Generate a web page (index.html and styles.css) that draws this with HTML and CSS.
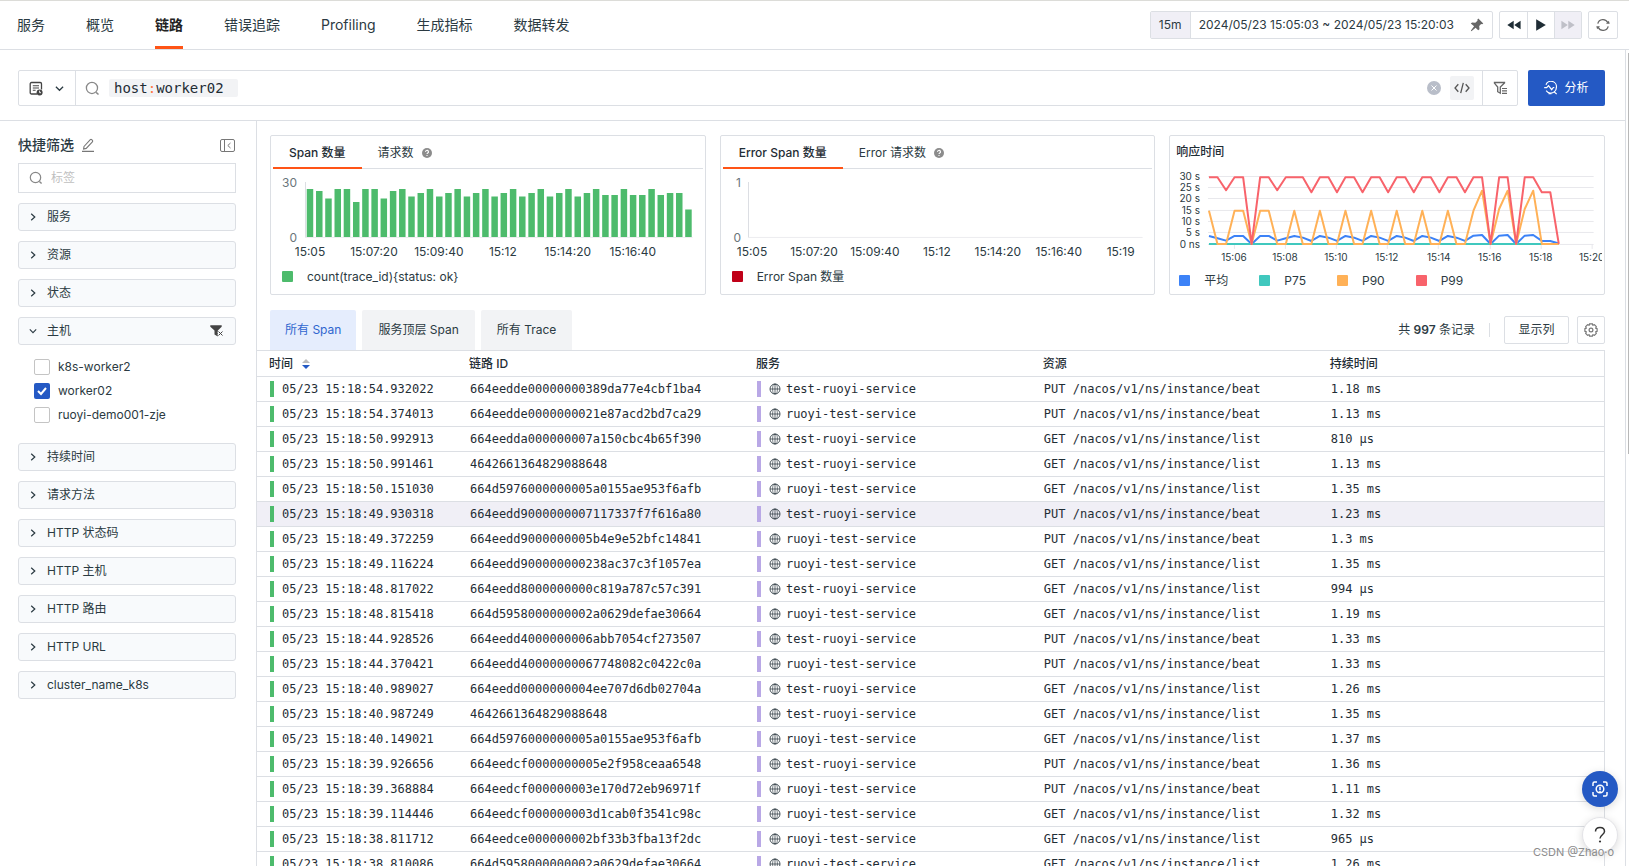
FILE: index.html
```html
<!DOCTYPE html>
<html lang="zh-CN">
<head>
<meta charset="utf-8">
<title>链路</title>
<link rel="stylesheet" href="styles.css">
</head>
<body>
<svg class="sprite" aria-hidden="true">
  <symbol id="i-search" viewBox="0 0 14 14"><circle cx="6.5" cy="6.5" r="5.2" fill="none" stroke="currentColor" stroke-width="1.2"/><path d="M10.4 10.6l2.2 2" stroke="currentColor" stroke-width="1.4"/></symbol>
  <symbol id="i-right" viewBox="0 0 8 8"><path d="M2.2 .8L5.8 4 2.2 7.2" fill="none" stroke="currentColor" stroke-width="1.2"/></symbol>
  <symbol id="i-down" viewBox="0 0 8 8"><path d="M.8 2.4L4 5.6l3.2-3.2" fill="none" stroke="currentColor" stroke-width="1.1"/></symbol>
  <symbol id="i-globe" viewBox="0 0 12 12"><g fill="none" stroke="currentColor" stroke-width=".8"><circle cx="6" cy="6" r="5"/><ellipse cx="6" cy="6" rx="2.400" ry="5" stroke-width=".6"/><path d="M6 1v10M1 6h10" stroke-width=".7"/></g></symbol>
  <symbol id="i-help" viewBox="0 0 10 10"><circle cx="5" cy="5" r="5" fill="#8c8c8c"/><path d="M3.500 3.900a1.500 1.400 0 1 1 2.300 1.100c-.6.400-.8.600-.8 1.100M5 7v1" fill="none" stroke="#fff" stroke-width="1.100"/></symbol>
</svg>

<header class="topbar">
  <nav class="nav">
    <a href="#">服务</a>
    <a href="#">概览</a>
    <a href="#" class="active">链路</a>
    <a href="#">错误追踪</a>
    <a href="#">Profiling</a>
    <a href="#">生成指标</a>
    <a href="#">数据转发</a>
  </nav>
  <div class="time">
    <div class="range">
      <button class="span-btn" type="button">15m</button>
      <button class="range-btn" type="button">2024/05/23 15:05:03 ~ 2024/05/23 15:20:03
        <svg width="14" height="14" viewBox="0 0 14 14"><path d="M8.300.6l5 4.800-1.200.8-1-.2-1.900 2.100.3 3.200-1.300 1L5.600 9.700 1.700 13l-.8.2.2-.9 3-4L.8 5.600l1.300-1.200 3.200.3 2.200-2-.2-1z" fill="#666"/></svg>
      </button>
    </div>
    <div class="steps">
      <button type="button" aria-label="后退"><svg width="14" height="10" viewBox="0 0 14 10"><path d="M6.700.8v8.400L.3 5zM13.600.8v8.400L7.200 5z" fill="#1f2d35"/></svg></button>
      <button type="button" aria-label="播放"><svg width="10" height="12" viewBox="0 0 10 12"><path d="M.2.3L9.800 6 .2 11.700z" fill="#1f2d35"/></svg></button>
      <button type="button" class="off" aria-label="前进" disabled><svg width="14" height="10" viewBox="0 0 14 10"><path d="M.4.8v8.400L6.800 5zM7.300.8v8.400L13.700 5z" fill="#bfc0c8"/></svg></button>
    </div>
    <button class="box-btn" type="button" aria-label="刷新"><svg width="14" height="14" viewBox="0 0 14 14"><path d="M1.800 5.700A5.300 5.300 0 0 1 11.800 4.800M12.200 8.300A5.300 5.300 0 0 1 2.200 9.200" fill="none" stroke="#666" stroke-width="1.300"/><path d="M10 5.700h3.700L12.900 2.800zM4 8.300H.3l.8 2.900z" fill="#666"/></svg></button>
  </div>
</header>

<div class="page">
  <div class="searchbar">
    <div class="query">
      <button class="saved" type="button" aria-label="快照">
        <svg width="14" height="15" viewBox="0 0 14 15"><path d="M8 13H2.500A1.300 1.300 0 0 1 1.200 11.700V2.800A1.300 1.300 0 0 1 2.500 1.500h8.700a1.300 1.300 0 0 1 1.300 1.300V8.500" fill="none" stroke="#444" stroke-width="1.300"/><path d="M3.800 4.700h6.200M3.800 7h6.200M3.800 9.300h2.800" stroke="#444" stroke-width="1.100"/><circle cx="10.600" cy="11.400" r="3" fill="#444"/><path d="M10.600 9.700v2h1.400" fill="none" stroke="#fff" stroke-width=".9"/></svg>
        <svg width="9" height="9"><use href="#i-down"/></svg>
      </button>
      <div class="field">
        <svg class="mag" width="15" height="15"><use href="#i-search"/></svg>
        <span class="token">host<i>:</i>worker02</span>
        <input class="rest" type="text" aria-label="搜索">
        <button class="clear" type="button" aria-label="清除"><svg width="14" height="14" viewBox="0 0 14 14"><circle cx="7" cy="7" r="7" fill="#b9bec9"/><path d="M4.500 4.500l5 5m0-5l-5 5" stroke="#fff"/></svg></button>
        <button class="code" type="button" aria-label="代码"><svg width="16" height="14" viewBox="0 0 16 14"><path d="M4.300 3.200L1 7l3.300 3.800M11.700 3.200L15 7l-3.300 3.800M9.300 1.800L6.700 12.200" fill="none" stroke="#555" stroke-width="1.300"/></svg></button>
      </div>
      <button class="filter" type="button" aria-label="筛选"><svg width="14" height="14" viewBox="0 0 14 14"><path d="M.8 1.500h11.400M1.200 1.800L4.700 6v4.700l2.600 1.500V6l4.400-4.200" fill="none" stroke="#666" stroke-width="1.300"/><path d="M9 7.500h5M9 9.900h5M9 12.300h5" stroke="#666" stroke-width="1.200"/></svg></button>
    </div>
    <button class="analyze" type="button"><svg width="14" height="14" viewBox="0 0 14 14"><path d="M2 3.800A5.400 5.400 0 0 1 12.400 6.500c0 2-.9 3.500-2.200 4.400M2.200 9.600a5.400 5.400 0 0 0 8 1.300M4.500 12.700h3M9.800 10.500l2.900 2.600M.2 6.700h2.500l1.800-2 3.200 4 1.600-2.200h1" fill="none" stroke="#fff" stroke-width="1.200"/></svg>分析</button>
  </div>

  <div class="body">
    <aside class="side">
      <div class="side-head">
        <h2>快捷筛选</h2>
        <svg width="12" height="14" viewBox="0 0 12 14"><path d="M2 8.500L8.300 1.700a1 1 0 0 1 1.400 0l.7.700a1 1 0 0 1 0 1.400L4.200 10.400 1.600 11zM0 13.400h12" fill="none" stroke="#777" stroke-width="1.100"/></svg>
        <button class="collapse" type="button" aria-label="收起"><svg width="15" height="13" viewBox="0 0 15 13"><rect x=".5" y=".5" width="14" height="12" rx="1.500" fill="none" stroke="#777"/><path d="M4.500 1v11M10.500 4L7.800 6.500l2.700 2.500" fill="none" stroke="#777"/></svg></button>
      </div>
      <div class="tagbox"><svg width="14" height="14"><use href="#i-search"/></svg><input type="text" placeholder="标签" aria-label="标签"></div>
      <div class="groups">
        <button class="group" type="button"><svg width="8" height="8"><use href="#i-right"/></svg>服务</button>
        <button class="group" type="button"><svg width="8" height="8"><use href="#i-right"/></svg>资源</button>
        <button class="group" type="button"><svg width="8" height="8"><use href="#i-right"/></svg>状态</button>
        <div>
          <button class="group" type="button"><svg width="8" height="8"><use href="#i-down"/></svg>主机
            <svg class="end" width="14" height="12" viewBox="0 0 14 12"><path d="M.3.300h11.400v1.400L7.800 5.600v6L4.500 9.500V5.600L.3 1.700z" fill="#444"/><path d="M8.300 6.300l4.400 4.400m0-4.400l-4.400 4.400" stroke="#f8fafc" stroke-width="2.600"/><path d="M8.500 6.500l4 4m0-4l-4 4" stroke="#444"/></svg>
          </button>
          <div class="options">
            <label><input type="checkbox">k8s-worker2</label>
            <label><input type="checkbox" checked>worker02</label>
            <label><input type="checkbox">ruoyi-demo001-zje</label>
          </div>
        </div>
        <button class="group" type="button"><svg width="8" height="8"><use href="#i-right"/></svg>持续时间</button>
        <button class="group" type="button"><svg width="8" height="8"><use href="#i-right"/></svg>请求方法</button>
        <button class="group" type="button"><svg width="8" height="8"><use href="#i-right"/></svg>HTTP 状态码</button>
        <button class="group" type="button"><svg width="8" height="8"><use href="#i-right"/></svg>HTTP 主机</button>
        <button class="group" type="button"><svg width="8" height="8"><use href="#i-right"/></svg>HTTP 路由</button>
        <button class="group" type="button"><svg width="8" height="8"><use href="#i-right"/></svg>HTTP URL</button>
        <button class="group" type="button"><svg width="8" height="8"><use href="#i-right"/></svg>cluster_name_k8s</button>
      </div>
    </aside>

    <main class="main">
      <div class="cards">
        <section class="card">
          <div class="ctabs">
            <button class="on" type="button">Span 数量</button>
            <button type="button">请求数 <svg width="10" height="10"><use href="#i-help"/></svg></button>
          </div>
          <svg class="chart" viewBox="0 0 434 90">
            <path d="M34.500 13v56" stroke="#dcdee3"/><path d="M34 68.500h388" stroke="#ececf0"/>
            <path class="bars" d="M39 68V20M48.300 68V22M57.500 68V29.500M66.800 68V20M76 68V20M85.300 68V33M94.500 68V20M103.700 68V20M112.900 68V29.500M122.200 68V22M131.400 68V20M140.600 68V27.500M149.900 68V24M159.100 68V20M168.400 68V27.500M177.600 68V24M186.800 68V20M196.100 68V27.500M205.300 68V24M214.600 68V20M223.800 68V27.500M233 68V24M242.300 68V20M251.500 68V27.500M260.800 68V24M270 68V20M279.200 68V27.500M288.500 68V24M297.700 68V20M307 68V27.500M316.200 68V24M325.400 68V20M334.700 68V26M343.900 68V26M353.200 68V20M362.400 68V26M371.600 68V26M380.900 68V20M390.100 68V26M399.400 68V24M408.600 68V24M417.800 68V40.500"/>
            <g class="ylab"><text x="26" y="18">30</text><text x="26" y="73">0</text></g>
            <g class="xlab"><text x="39" y="87">15:05</text><text x="103" y="87">15:07:20</text><text x="168" y="87">15:09:40</text><text x="232" y="87">15:12</text><text x="297" y="87">15:14:20</text><text x="362" y="87">15:16:40</text></g>
          </svg>
          <div class="legend"><span class="key green">count(trace_id){status: ok}</span></div>
        </section>
        <section class="card">
          <div class="ctabs">
            <button class="on" type="button">Error Span 数量</button>
            <button type="button">Error 请求数 <svg width="10" height="10"><use href="#i-help"/></svg></button>
          </div>
          <svg class="chart" viewBox="0 0 434 90">
            <path d="M27.500 13v56" stroke="#dcdee3"/><path d="M27 68.500h395" stroke="#ececf0"/>
            <g class="ylab"><text x="20" y="18">1</text><text x="20" y="73">0</text></g>
            <g class="xlab"><text x="31" y="87">15:05</text><text x="93" y="87">15:07:20</text><text x="154" y="87">15:09:40</text><text x="216" y="87">15:12</text><text x="277" y="87">15:14:20</text><text x="338" y="87">15:16:40</text><text x="400" y="87">15:19</text></g>
          </svg>
          <div class="legend"><span class="key dark">Error Span 数量</span></div>
        </section>
        <section class="card resp">
          <h3>响应时间</h3>
          <svg class="chart" viewBox="0 0 432 96">
            <path d="M38 6.500h386M38 17.500h386M38 28.500h386M38 40.500h386M38 51.500h386M38 62.500h386M38 74.500h386M64.500 75v4M115.500 75v4M166.500 75v4M217.500 75v4M268.500 75v4M320.500 75v4M371.500 75v4M422.500 75v4" stroke="#e8e8ec"/>
            <g class="line">
              <path stroke="#3c82f7" d="M39 66L47.500 68.300 56.100 70.700 64.600 66H73.200L81.700 74 90.200 66H98.800L107.300 70.700 115.900 68.300 124.400 66 132.900 67.700 141.500 71 150 66 158.600 67.700 167.100 71 175.600 66 184.200 67.700 192.700 71 201.300 66 209.800 67.700 218.300 71 226.900 66 235.400 67.700 244 71 252.500 66 261 67.700 269.600 71 278.100 66 286.700 67.700 295.200 71 303.700 65.700 312.300 65 320.800 74 329.400 65.700 337.900 65 346.400 74 355 65.700 363.500 65 372.100 71H380.600L389.100 73.500"/>
              <path stroke="#40c8be" d="M39 74H389"/>
              <path stroke="#ffb157" d="M39 40.700L47.500 74H56.100L64.600 40.700H73.200L81.700 74 90.200 40.700H98.800L107.300 74H115.900L124.400 40.700 132.900 74H141.500L150 40.700 158.600 74H167.100L175.600 40.700 184.200 74H192.700L201.300 40.700 209.800 74H218.300L226.900 40.700 235.400 74H244L252.500 40.700 261 74H269.600L278.100 40.700 286.700 74H295.200L303.700 40.700 312.300 20.700 320.800 74 329.400 39 337.900 20.700 346.400 74 355 39 363.500 20.700 372.100 74H389.100"/>
              <path stroke="#f8636b" d="M39 7.300H47.500L56.100 20.300 64.600 7.300H73.200L81.700 74 90.200 7.300H98.800L107.300 20.300 115.900 7.300H132.900L141.500 22.300 150 7.300H158.600L167.100 22.300 175.600 7.300H184.200L192.700 22.300 201.300 7.300H209.800L218.300 22.300 226.900 7.300H235.400L244 22.300 252.500 7.300H261L269.600 22.300 278.100 7.300H286.700L295.200 22.300 303.700 7.300H312.300L320.800 74 329.400 7.300H337.900L346.400 74 355 7.300H363.500L372.100 22.300H380.600L389.100 74"/>
            </g>
            <g class="ylab small"><text x="30" y="10">30 s</text><text x="30" y="21">25 s</text><text x="30" y="32">20 s</text><text x="30" y="44">15 s</text><text x="30" y="55">10 s</text><text x="30" y="66">5 s</text><text x="30" y="78">0 ns</text></g>
            <g class="xlab small"><text x="64" y="91">15:06</text><text x="115" y="91">15:08</text><text x="166" y="91">15:10</text><text x="217" y="91">15:12</text><text x="269" y="91">15:14</text><text x="320" y="91">15:16</text><text x="371" y="91">15:18</text><text x="422" y="91">15:20</text></g>
          </svg>
          <div class="legend multi"><span class="key blue">平均</span><span class="key teal">P75</span><span class="key orange">P90</span><span class="key red">P99</span></div>
        </section>
      </div>

      <div class="toolbar">
        <div class="views">
          <button class="on" type="button">所有 Span</button>
          <button type="button">服务顶层 Span</button>
          <button type="button">所有 Trace</button>
        </div>
        <div class="tools">
          <span class="count">共 <b>997</b> 条记录</span>
          <button class="cols" type="button">显示列</button>
          <button class="box-btn" type="button" aria-label="设置"><svg width="14" height="14" viewBox="0 0 14 14"><path d="M5.600.8h2.800l.5 1.400 1.500-.5 1.900 2-.6 1.400 1.400.6v2.600l-1.400.6.6 1.400-1.900 2-1.500-.5-.5 1.400H5.600l-.5-1.400-1.500.5-1.900-2 .6-1.400L.9 8.300V5.700l1.400-.6-.6-1.400 1.900-2 1.500.5z" fill="none" stroke="#777" stroke-width="1.200"/><circle cx="7" cy="7" r="1.900" fill="none" stroke="#777" stroke-width="1.200"/></svg></button>
        </div>
      </div>

      <table class="grid">
        <colgroup><col class="c-time"><col class="c-wide"><col class="c-wide"><col class="c-wide"><col></colgroup>
        <thead><tr><th>时间<svg class="sort" width="8" height="10" viewBox="0 0 8 10"><path d="M0 4l4-4 4 4z" fill="#bbb"/><path d="M0 6l4 4 4-4z" fill="#2459c4"/></svg></th><th>链路 ID</th><th>服务</th><th>资源</th><th>持续时间</th></tr></thead>
        <tbody>
          <tr><td><span class="t">05/23 15:18:54.932022</span></td><td>664eedde00000000389da77e4cbf1ba4</td><td><span class="s"><svg><use href="#i-globe"/></svg>test-ruoyi-service</span></td><td>PUT /nacos/v1/ns/instance/beat</td><td>1.18 ms</td></tr>
          <tr><td><span class="t">05/23 15:18:54.374013</span></td><td>664eedde0000000021e87acd2bd7ca29</td><td><span class="s"><svg><use href="#i-globe"/></svg>ruoyi-test-service</span></td><td>PUT /nacos/v1/ns/instance/beat</td><td>1.13 ms</td></tr>
          <tr><td><span class="t">05/23 15:18:50.992913</span></td><td>664eedda000000007a150cbc4b65f390</td><td><span class="s"><svg><use href="#i-globe"/></svg>test-ruoyi-service</span></td><td>GET /nacos/v1/ns/instance/list</td><td>810 μs</td></tr>
          <tr><td><span class="t">05/23 15:18:50.991461</span></td><td>4642661364829088648</td><td><span class="s"><svg><use href="#i-globe"/></svg>test-ruoyi-service</span></td><td>GET /nacos/v1/ns/instance/list</td><td>1.13 ms</td></tr>
          <tr><td><span class="t">05/23 15:18:50.151030</span></td><td>664d5976000000005a0155ae953f6afb</td><td><span class="s"><svg><use href="#i-globe"/></svg>ruoyi-test-service</span></td><td>GET /nacos/v1/ns/instance/list</td><td>1.35 ms</td></tr>
          <tr class="hover"><td><span class="t">05/23 15:18:49.930318</span></td><td>664eedd9000000007117337f7f616a80</td><td><span class="s"><svg><use href="#i-globe"/></svg>test-ruoyi-service</span></td><td>PUT /nacos/v1/ns/instance/beat</td><td>1.23 ms</td></tr>
          <tr><td><span class="t">05/23 15:18:49.372259</span></td><td>664eedd9000000005b4e9e52bfc14841</td><td><span class="s"><svg><use href="#i-globe"/></svg>ruoyi-test-service</span></td><td>PUT /nacos/v1/ns/instance/beat</td><td>1.3 ms</td></tr>
          <tr><td><span class="t">05/23 15:18:49.116224</span></td><td>664eedd900000000238ac37c3f1057ea</td><td><span class="s"><svg><use href="#i-globe"/></svg>ruoyi-test-service</span></td><td>GET /nacos/v1/ns/instance/list</td><td>1.35 ms</td></tr>
          <tr><td><span class="t">05/23 15:18:48.817022</span></td><td>664eedd8000000000c819a787c57c391</td><td><span class="s"><svg><use href="#i-globe"/></svg>test-ruoyi-service</span></td><td>GET /nacos/v1/ns/instance/list</td><td>994 μs</td></tr>
          <tr><td><span class="t">05/23 15:18:48.815418</span></td><td>664d5958000000002a0629defae30664</td><td><span class="s"><svg><use href="#i-globe"/></svg>ruoyi-test-service</span></td><td>GET /nacos/v1/ns/instance/list</td><td>1.19 ms</td></tr>
          <tr><td><span class="t">05/23 15:18:44.928526</span></td><td>664eedd4000000006abb7054cf273507</td><td><span class="s"><svg><use href="#i-globe"/></svg>test-ruoyi-service</span></td><td>PUT /nacos/v1/ns/instance/beat</td><td>1.33 ms</td></tr>
          <tr><td><span class="t">05/23 15:18:44.370421</span></td><td>664eedd40000000067748082c0422c0a</td><td><span class="s"><svg><use href="#i-globe"/></svg>ruoyi-test-service</span></td><td>PUT /nacos/v1/ns/instance/beat</td><td>1.33 ms</td></tr>
          <tr><td><span class="t">05/23 15:18:40.989027</span></td><td>664eedd0000000004ee707d6db02704a</td><td><span class="s"><svg><use href="#i-globe"/></svg>test-ruoyi-service</span></td><td>GET /nacos/v1/ns/instance/list</td><td>1.26 ms</td></tr>
          <tr><td><span class="t">05/23 15:18:40.987249</span></td><td>4642661364829088648</td><td><span class="s"><svg><use href="#i-globe"/></svg>test-ruoyi-service</span></td><td>GET /nacos/v1/ns/instance/list</td><td>1.35 ms</td></tr>
          <tr><td><span class="t">05/23 15:18:40.149021</span></td><td>664d5976000000005a0155ae953f6afb</td><td><span class="s"><svg><use href="#i-globe"/></svg>ruoyi-test-service</span></td><td>GET /nacos/v1/ns/instance/list</td><td>1.37 ms</td></tr>
          <tr><td><span class="t">05/23 15:18:39.926656</span></td><td>664eedcf0000000005e2f958ceaa6548</td><td><span class="s"><svg><use href="#i-globe"/></svg>test-ruoyi-service</span></td><td>PUT /nacos/v1/ns/instance/beat</td><td>1.36 ms</td></tr>
          <tr><td><span class="t">05/23 15:18:39.368884</span></td><td>664eedcf000000003e170d72eb96971f</td><td><span class="s"><svg><use href="#i-globe"/></svg>ruoyi-test-service</span></td><td>PUT /nacos/v1/ns/instance/beat</td><td>1.11 ms</td></tr>
          <tr><td><span class="t">05/23 15:18:39.114446</span></td><td>664eedcf000000003d1cab0f3541c98c</td><td><span class="s"><svg><use href="#i-globe"/></svg>ruoyi-test-service</span></td><td>GET /nacos/v1/ns/instance/list</td><td>1.32 ms</td></tr>
          <tr><td><span class="t">05/23 15:18:38.811712</span></td><td>664eedce000000002bf33b3fba13f2dc</td><td><span class="s"><svg><use href="#i-globe"/></svg>ruoyi-test-service</span></td><td>GET /nacos/v1/ns/instance/list</td><td>965 μs</td></tr>
          <tr><td><span class="t">05/23 15:18:38.810086</span></td><td>664d5958000000002a0629defae30664</td><td><span class="s"><svg><use href="#i-globe"/></svg>ruoyi-test-service</span></td><td>GET /nacos/v1/ns/instance/list</td><td>1.26 ms</td></tr>
        </tbody>
      </table>
    </main>
  </div>
</div>

<div class="thumb"></div>
<div class="floats">
  <button class="scan" type="button" aria-label="扫描"><svg width="16" height="16" viewBox="0 0 16 16"><g fill="none" stroke="#fff" stroke-width="1.500"><path d="M1 5V2.500A1.500 1.500 0 0 1 2.500 1H5M11 1h2.500A1.500 1.500 0 0 1 15 2.500V5M15 11v2.500a1.500 1.500 0 0 1-1.500 1.500H11M5 15H2.500A1.500 1.500 0 0 1 1 13.500V11"/><circle cx="8" cy="8" r="3.800"/><path d="M8 5.800v3.400M8 9.900v1"/></g></svg></button>
  <button class="help" type="button" aria-label="帮助"><svg width="12" height="18" viewBox="0 0 12 18"><path d="M1.500 5.500C1.500 2.800 3.500 1.500 6 1.500s4.500 1.500 4.500 4c0 3-4.500 3.500-4.500 7" fill="none" stroke="#333" stroke-width="1.500"/><circle cx="6" cy="15.500" r="1.100" fill="#333"/></svg></button>
</div>
<div class="mark">CSDN @Zhao·o</div>
</body>
</html>
```
FILE: styles.css
```css
* { box-sizing: border-box; }

body {
  margin: 0;
  height: 100vh;
  overflow: hidden;
  display: flex;
  flex-direction: column;
  background: #fff;
  color: #2b3a42;
  font: 12px/18px Inter, "Noto Sans CJK SC", sans-serif;
  border-top: 1px solid #dcdcd8;
}

button, input {
  font: inherit;
  color: inherit;
  background: none;
  border: 0;
  padding: 0;
  margin: 0;
}

svg { flex: none; }
.sprite { display: none; }

/* top bar */
.topbar {
  flex: none;
  height: 49px;
  display: flex;
  justify-content: space-between;
  padding: 0 11px 0 17px;
  border-bottom: 1px solid #dcdfe4;
}

.nav { display: flex; gap: 41px; }

.nav a {
  font-size: 14px;
  line-height: 48px;
  color: #2b3a42;
  text-decoration: none;
  height: 48px;
}

.nav .active {
  font-weight: 700;
  color: #222;
  border-bottom: 3px solid #ff5416;
}

.time { display: flex; gap: 6px; padding-top: 10px; }

.range, .steps {
  display: flex;
  height: 28px;
  border: 1px solid #dcdfe4;
  border-radius: 2px;
}

.span-btn {
  width: 40px;
  background: #f0eff6;
  border-right: 1px solid #dcdfe4;
}

.range-btn {
  display: flex;
  align-items: center;
  gap: 16px;
  padding: 0 8px;
}

.steps button {
  width: 27px;
  display: flex;
  align-items: center;
  justify-content: center;
}

.steps button + button { border-left: 1px solid #dcdfe4; }
.steps .off { background: #f0eff6; }

.box-btn {
  width: 30px;
  height: 28px;
  display: flex;
  align-items: center;
  justify-content: center;
  border: 1px solid #dcdfe4;
  border-radius: 2px;
}

/* page frame */
.page {
  flex: 1;
  min-height: 0;
  display: flex;
  flex-direction: column;
  overflow: hidden;
  margin-right: 3px;
  border-right: 1px solid #dcdfe4;
}

.searchbar {
  flex: none;
  display: flex;
  gap: 10px;
  padding: 20px 20px 14px 18px;
  border-bottom: 1px solid #dcdfe4;
}

.query {
  flex: 1;
  display: flex;
  height: 36px;
  border: 1px solid #dcdfe4;
  border-radius: 2px;
}

.saved {
  width: 57px;
  display: flex;
  align-items: center;
  justify-content: center;
  gap: 12px;
  padding-right: 2px;
  border-right: 1px solid #dcdfe4;
}

.field {
  flex: 1;
  display: flex;
  align-items: center;
  padding: 0 8px 0 9px;
}

.mag { color: #888; }

.token {
  margin-left: 9px;
  padding: 0 14px 0 5px;
  background: #f2f3f5;
  border-radius: 2px;
  color: #1f2d35;
  font: 14px/18px "DejaVu Sans Mono", monospace;
}

.token i { font-style: normal; color: #ff7a45; }
.rest { flex: 1; min-width: 0; outline: 0; }

.clear, .code, .filter {
  display: flex;
  align-items: center;
  justify-content: center;
}

.code {
  width: 24px;
  height: 24px;
  margin-left: 9px;
  background: #f2f3f5;
  border-radius: 2px;
}

.filter { width: 35px; border-left: 1px solid #dcdfe4; }

.analyze {
  width: 77px;
  height: 36px;
  display: flex;
  align-items: center;
  justify-content: center;
  gap: 6px;
  background: #2459c4;
  border-radius: 2px;
  color: #fff;
}

.body { flex: 1; min-height: 0; display: flex; }

/* filters */
.side {
  flex: none;
  width: 257px;
  padding: 14px 20px 0 18px;
  border-right: 1px solid #dcdfe4;
}

.side-head {
  display: flex;
  align-items: center;
  height: 20px;
  margin-bottom: 8px;
  padding-right: 1px;
}

.side-head h2 { margin: 0 8px 0 0; font-size: 14px; font-weight: 500; }
.collapse { margin-left: auto; display: flex; }

.tagbox {
  display: flex;
  align-items: center;
  gap: 8px;
  height: 30px;
  padding: 0 10px;
  border: 1px solid #dcdfe4;
  color: #888;
}

.tagbox input { flex: 1; min-width: 0; outline: 0; }
.tagbox input::placeholder { color: #bfbfbf; opacity: 1; }

.groups {
  display: flex;
  flex-direction: column;
  gap: 10px;
  margin-top: 10px;
}

.group {
  width: 100%;
  height: 28px;
  display: flex;
  align-items: center;
  gap: 10px;
  padding: 0 11px 0 10px;
  background: #f8fafc;
  border: 1px solid #dcdfe4;
  border-radius: 3px;
  text-align: left;
}

.group .end { margin-left: auto; }

.options {
  display: flex;
  flex-direction: column;
  gap: 6px;
  padding: 13px 16px 9px;
}

.options label {
  display: flex;
  align-items: center;
  gap: 8px;
}

.options input {
  appearance: none;
  width: 16px;
  height: 16px;
  border: 1px solid #c4c4c4;
  border-radius: 2px;
}

.options input:checked {
  border: 0;
  background: #2459c4 url("data:image/svg+xml,%3Csvg xmlns='http://www.w3.org/2000/svg' viewBox='0 0 16 16'%3E%3Cpath d='M4 8l3 3 5-6' fill='none' stroke='white' stroke-width='2'/%3E%3C/svg%3E");
}

/* charts */
.main { flex: 1; min-width: 0; }

.cards {
  display: grid;
  grid-template-columns: repeat(3, 1fr);
  gap: 14px;
  padding: 14px 20px 15px 13px;
}

.card {
  min-width: 0;
  height: 160px;
  border: 1px solid #dcdfe4;
  border-radius: 2px;
}

.resp { padding-right: 2px; }

.card h3 {
  margin: 0;
  padding: 7px 6px 9px;
  font-size: 12px;
  font-weight: 500;
  color: #1f2d35;
}

.ctabs {
  display: flex;
  height: 33px;
  margin: 0 2px;
  border-bottom: 1px solid #dcdfe4;
}

.ctabs button {
  display: flex;
  align-items: center;
  gap: 8px;
  height: 33px;
  padding: 0 16px;
}

.ctabs .on {
  font-weight: 500;
  color: #1f2d35;
  border-bottom: 2px solid #ff5416;
  padding-top: 2px;
}

.chart { display: block; width: 100%; }
.bars { stroke: #4dbb6c; stroke-width: 6.5; }
.line path { fill: none; stroke-width: 2; stroke-linejoin: round; }
.ylab text { text-anchor: end; fill: #6b757b; }
.xlab text { text-anchor: middle; fill: #2b3a42; }
.small { font-size: 10px; }
.small text { fill: #2b3a42; }

.legend { display: flex; gap: 31px; padding: 9px 11px; }
.legend.multi { padding: 6px 9px; }

.key { display: flex; align-items: center; gap: 14px; }

.key::before {
  content: "";
  width: 11px;
  height: 11px;
  border-radius: 1px;
}

.green::before { background: #4dbb6c; }
.dark::before { background: #c00018; }
.blue::before { background: #3c82f7; }
.teal::before { background: #40c8be; }
.orange::before { background: #ffb157; }
.red::before { background: #f8636b; }

/* list toolbar */
.toolbar {
  display: flex;
  justify-content: space-between;
  padding: 0 20px 0 13px;
}

.views { display: flex; gap: 6px; }

.views button {
  height: 40px;
  padding: 0 16px;
  background: #f2f3f5;
  border-radius: 2px 2px 0 0;
}

.views .on { background: #e5edfd; color: #2f66cf; padding: 0 15px; }

.tools { display: flex; align-items: center; gap: 8px; }

.count {
  padding-right: 14px;
  margin-right: 6px;
  line-height: 14px;
  border-right: 1px solid #dcdfe4;
}

.count b { font-weight: 600; }

.cols {
  height: 28px;
  width: 65px;
  border: 1px solid #dcdfe4;
  border-radius: 2px;
}

.tools .box-btn { width: 28px; }

/* span list */
.grid {
  width: calc(100% - 20px);
  table-layout: fixed;
  border-collapse: separate;
  border-spacing: 0;
  border-top: 1px solid #dcdfe4;
  border-right: 1px solid #dcdfe4;
}

.c-time { width: 200px; }
.c-wide { width: 21.3%; }

th, td {
  height: 25px;
  padding: 0 12px;
  border-bottom: 1px solid #dcdfe4;
  text-align: left;
  white-space: nowrap;
}

th { height: 26px; font-weight: 500; color: #1f2d35; }
.sort { margin-left: 9px; vertical-align: -1px; }

td {
  padding: 0 13px;
  color: #1f2d35;
  font: 12px/16px "DejaVu Sans Mono", monospace;
}

.hover td { background: #f0eff6; }

.t, .s { display: flex; align-items: center; border-left: 4px solid #4dbb6c; }
.t { padding-left: 8px; }
.s { border-color: #b9a8e6; padding-left: 8px; gap: 5px; }
.s svg { width: 12px; height: 12px; }

/* overlays */
.thumb {
  position: absolute;
  right: 0;
  top: 53px;
  width: 1px;
  height: 401px;
  background: #b8b8b8;
}

.floats {
  position: absolute;
  right: 11px;
  bottom: 13px;
  display: flex;
  flex-direction: column;
  gap: 10px;
}

.floats button {
  width: 36px;
  height: 36px;
  display: flex;
  align-items: center;
  justify-content: center;
  border-radius: 50%;
  box-shadow: 0 2px 8px rgba(0, 0, 0, .15);
}

.scan { background: #2459c4; }
.help { background: #fff; border: 1px solid #e4e4e8; }

.mark {
  position: absolute;
  right: 15px;
  bottom: 5px;
  font-size: 11px;
  color: #8c8c8c;
}
```
